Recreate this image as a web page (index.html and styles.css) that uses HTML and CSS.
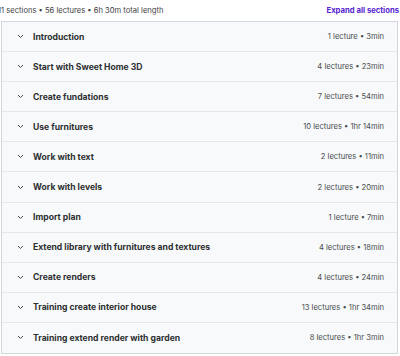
FILE: index.html
```html
<!doctype html>
<html lang="en">
  <head>
    <meta charset="UTF-8" />
    <title>Course content</title>
    <link rel="stylesheet" href="styles.css">
  </head>
  <body>
    <div class="curriculum">
      <div class="curriculum-header">
        <span class="curriculum-stats">11 sections • 56 lectures • 6h 30m total length</span>
        <button class="expand-all">Expand all sections</button>
      </div>

      <div class="section-list">
        <div class="section-row">
          <span class="chevron"><svg width="7" height="5" viewBox="0 0 7 5"><path d="M1 1l2.5 2.5L6 1" fill="none" stroke="currentColor" stroke-width="1"/></svg></span>
          <span class="section-title">Introduction</span>
          <span class="section-meta">1 lecture • 3min</span>
        </div>
        <div class="section-row">
          <span class="chevron"><svg width="7" height="5" viewBox="0 0 7 5"><path d="M1 1l2.5 2.5L6 1" fill="none" stroke="currentColor" stroke-width="1"/></svg></span>
          <span class="section-title">Start with Sweet Home 3D</span>
          <span class="section-meta">4 lectures • 23min</span>
        </div>
        <div class="section-row">
          <span class="chevron"><svg width="7" height="5" viewBox="0 0 7 5"><path d="M1 1l2.5 2.5L6 1" fill="none" stroke="currentColor" stroke-width="1"/></svg></span>
          <span class="section-title">Create fundations</span>
          <span class="section-meta">7 lectures • 54min</span>
        </div>
        <div class="section-row">
          <span class="chevron"><svg width="7" height="5" viewBox="0 0 7 5"><path d="M1 1l2.5 2.5L6 1" fill="none" stroke="currentColor" stroke-width="1"/></svg></span>
          <span class="section-title">Use furnitures</span>
          <span class="section-meta">10 lectures • 1hr 14min</span>
        </div>
        <div class="section-row">
          <span class="chevron"><svg width="7" height="5" viewBox="0 0 7 5"><path d="M1 1l2.5 2.5L6 1" fill="none" stroke="currentColor" stroke-width="1"/></svg></span>
          <span class="section-title">Work with text</span>
          <span class="section-meta">2 lectures • 11min</span>
        </div>
        <div class="section-row">
          <span class="chevron"><svg width="7" height="5" viewBox="0 0 7 5"><path d="M1 1l2.5 2.5L6 1" fill="none" stroke="currentColor" stroke-width="1"/></svg></span>
          <span class="section-title">Work with levels</span>
          <span class="section-meta">2 lectures • 20min</span>
        </div>
        <div class="section-row">
          <span class="chevron"><svg width="7" height="5" viewBox="0 0 7 5"><path d="M1 1l2.5 2.5L6 1" fill="none" stroke="currentColor" stroke-width="1"/></svg></span>
          <span class="section-title">Import plan</span>
          <span class="section-meta">1 lecture • 7min</span>
        </div>
        <div class="section-row">
          <span class="chevron"><svg width="7" height="5" viewBox="0 0 7 5"><path d="M1 1l2.5 2.5L6 1" fill="none" stroke="currentColor" stroke-width="1"/></svg></span>
          <span class="section-title">Extend library with furnitures and textures</span>
          <span class="section-meta">4 lectures • 18min</span>
        </div>
        <div class="section-row">
          <span class="chevron"><svg width="7" height="5" viewBox="0 0 7 5"><path d="M1 1l2.5 2.5L6 1" fill="none" stroke="currentColor" stroke-width="1"/></svg></span>
          <span class="section-title">Create renders</span>
          <span class="section-meta">4 lectures • 24min</span>
        </div>
        <div class="section-row">
          <span class="chevron"><svg width="7" height="5" viewBox="0 0 7 5"><path d="M1 1l2.5 2.5L6 1" fill="none" stroke="currentColor" stroke-width="1"/></svg></span>
          <span class="section-title">Training create interior house</span>
          <span class="section-meta">13 lectures • 1hr 34min</span>
        </div>
        <div class="section-row">
          <span class="chevron"><svg width="7" height="5" viewBox="0 0 7 5"><path d="M1 1l2.5 2.5L6 1" fill="none" stroke="currentColor" stroke-width="1"/></svg></span>
          <span class="section-title">Training extend render with garden</span>
          <span class="section-meta">8 lectures • 1hr 3min</span>
        </div>
      </div>
    </div>
  </body>
</html>
```

FILE: styles.css
```css
* {
  margin: 0;
  padding: 0;
  box-sizing: border-box;
}

body {
  font-family: Inter, 'Open Sans', sans-serif;
  background: white;
  color: #2d2f31;
  width: 400px;
  overflow: hidden;
}

.curriculum {
  margin-left: -2px;
  width: 401px;
}

.curriculum-header {
  display: flex;
  align-items: center;
  justify-content: space-between;
  height: 21px;
  padding-bottom: 1px;
}

.curriculum-stats {
  font-size: 7.6px;
  color: #3e4143;
}

.expand-all {
  background: none;
  border: none;
  font-family: inherit;
  font-size: 7.7px;
  font-weight: 700;
  color: #5624d0;
  cursor: pointer;
}

.section-list {
  margin-left: 3px;
  width: 397px;
  border: 1px solid #d1d7dc;
}

.section-row {
  display: flex;
  align-items: center;
  height: 30.1px;
  padding: 0 13px 0 15px;
  background: #f7f9fa;
  border-bottom: 1px solid #e4e8eb;
}

.section-row:last-child {
  border-bottom: none;
}

.chevron {
  display: flex;
  width: 16px;
  color: #4a4d50;
}

.section-title {
  flex: 1;
  font-size: 8.6px;
  font-weight: 700;
  color: #2d2f31;
}

.section-meta {
  font-size: 7.6px;
  color: #4a4d50;
}
```
